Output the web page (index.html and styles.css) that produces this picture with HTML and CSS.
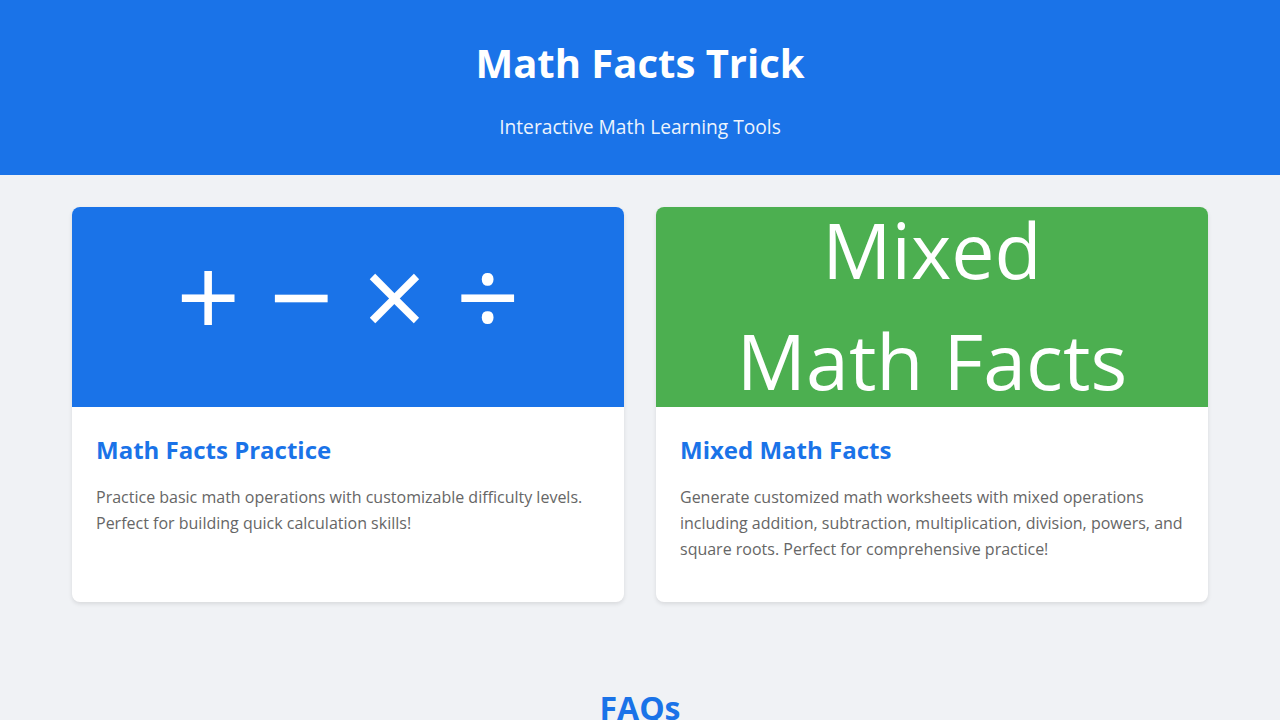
FILE: index.html
```html
<!DOCTYPE html>
<html lang="en">
<head>
<meta charset="utf-8">
<title>Math Facts Trick</title>
<link rel="stylesheet" href="styles.css">
</head>
<body>
<header class="site-header">
  <h1 class="site-title">Math Facts Trick</h1>
  <p class="site-subtitle">Interactive Math Learning Tools</p>
</header>
<main class="container">
  <section class="cards">
    <article class="card">
      <div class="card-image blue">
        <span class="ops">+ − × ÷</span>
      </div>
      <div class="card-body">
        <h3 class="card-title">Math Facts Practice</h3>
        <p class="card-text">Practice basic math operations with customizable difficulty levels. Perfect for building quick calculation skills!</p>
      </div>
    </article>
    <article class="card">
      <div class="card-image green">
        <span class="mixed">Mixed Math Facts</span>
      </div>
      <div class="card-body">
        <h3 class="card-title">Mixed Math Facts</h3>
        <p class="card-text">Generate customized math worksheets with mixed operations including addition, subtraction, multiplication, division, powers, and square roots. Perfect for comprehensive practice!</p>
      </div>
    </article>
  </section>
  <section class="faq">
    <h2 class="faq-title">FAQs</h2>
  </section>
</main>
</body>
</html>
```
FILE: styles.css
```css
* { box-sizing: border-box; }
html, body { margin: 0; padding: 0; }
body {
  font-family: "Open Sans", "Liberation Sans", sans-serif;
  background: #f0f2f5;
  color: #333;
  line-height: 1.6;
}
.site-header {
  background: #1a73e8;
  color: #fff;
  text-align: center;
  padding: 39px 20px 0;
  height: 175px;
}
.site-title {
  margin: 0 0 25px;
  font-size: 40px;
  font-weight: 700;
  line-height: 1.2;
}
.site-subtitle {
  margin: 0;
  font-size: 19.2px;
  opacity: 0.92;
}
.container {
  max-width: 1200px;
  margin: 0 auto;
  padding: 32px 32px;
}
.cards {
  display: grid;
  grid-template-columns: 1fr 1fr;
  gap: 32px;
}
.card {
  background: #fff;
  border-radius: 8px;
  overflow: hidden;
  box-shadow: 0 2px 4px rgba(0,0,0,0.1);
}
.card-image {
  height: 200px;
  display: flex;
  align-items: center;
  justify-content: center;
  color: #fff;
  overflow: hidden;
  text-align: center;
}
.card-image.blue { background: #1a73e8; }
.card-image.green { background: #4caf50; }
.ops {
  font-size: 112px;
  line-height: 1;
  margin-bottom: 24px;
}
.mixed {
  font-size: 77px;
  line-height: 111px;
  max-width: 420px;
  margin-bottom: 5px;
}
.card-body {
  padding: 24px;
}
.card-title {
  margin: 0 0 16px;
  font-size: 24px;
  font-weight: 700;
  color: #1a73e8;
}
.card-text {
  margin: 0 0 16px;
  font-size: 16px;
  color: #666;
}
.faq {
  text-align: center;
  padding-top: 80px;
}
.faq-title {
  margin: 0;
  font-size: 32px;
  font-weight: 700;
  color: #1a73e8;
}
```
